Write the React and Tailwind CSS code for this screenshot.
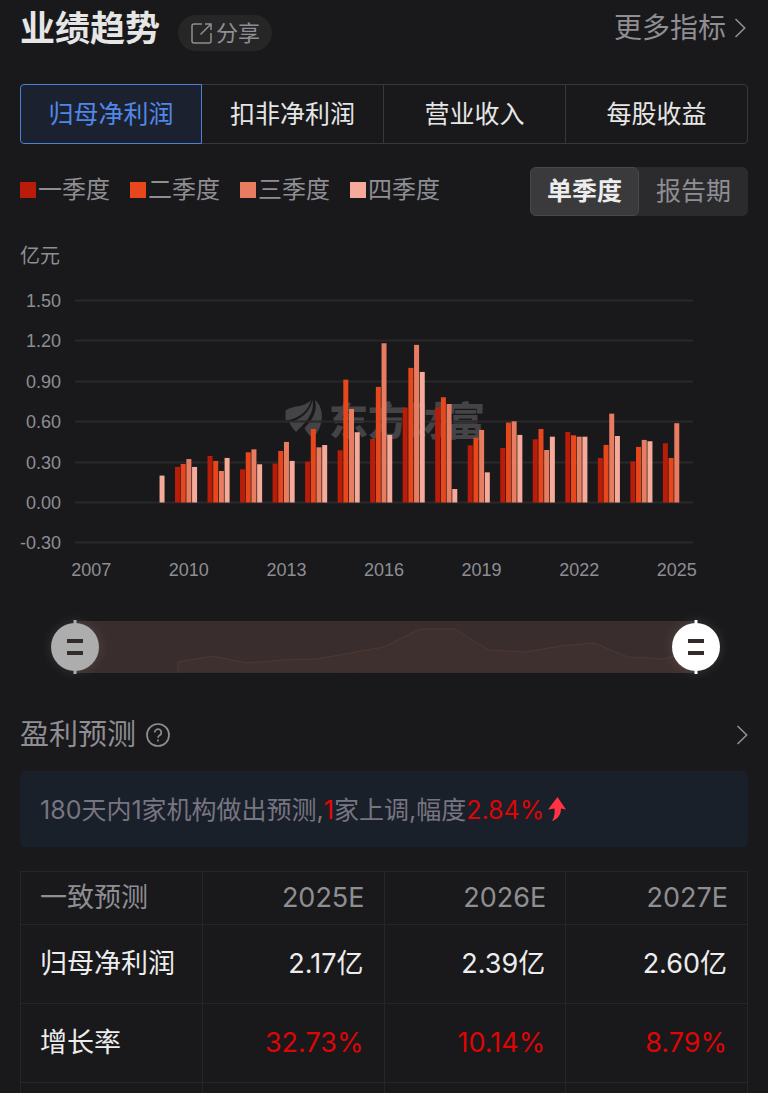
import React, { useState } from "react";

const metrics = ["归母净利润", "扣非净利润", "营业收入", "每股收益"];
const periods = ["单季度", "报告期"];

const legend = [
  { label: "一季度", color: "bg-[#b91c08]" },
  { label: "二季度", color: "bg-[#e8471c]" },
  { label: "三季度", color: "bg-[#e87c60]" },
  { label: "四季度", color: "bg-[#f6aa99]" },
];

const barFills = ["fill-[#b91c08]", "fill-[#e8471c]", "fill-[#e87c60]", "fill-[#f6aa99]"];

// quarterly net profit, 亿元
const profits = [
  { year: 2007, values: [] },
  { year: 2008, values: [] },
  { year: 2009, values: [null, null, null, 0.2] },
  { year: 2010, values: [0.264, 0.286, 0.323, 0.264] },
  { year: 2011, values: [0.346, 0.309, 0.234, 0.331] },
  { year: 2012, values: [0.247, 0.373, 0.395, 0.284] },
  { year: 2013, values: [0.289, 0.383, 0.45, 0.309] },
  { year: 2014, values: [0.304, 0.546, 0.41, 0.427] },
  { year: 2015, values: [0.388, 0.913, 0.695, 0.522] },
  { year: 2016, values: [0.472, 0.859, 1.183, 0.502] },
  { year: 2017, values: [0.705, 1.0, 1.171, 0.97] },
  { year: 2018, values: [0.705, 0.782, 0.732, 0.1] },
  { year: 2019, values: [0.425, 0.482, 0.539, 0.224] },
  { year: 2020, values: [0.405, 0.594, 0.603, 0.502] },
  { year: 2021, values: [0.47, 0.546, 0.39, 0.489] },
  { year: 2022, values: [0.524, 0.499, 0.489, 0.489] },
  { year: 2023, values: [0.331, 0.428, 0.66, 0.494] },
  { year: 2024, values: [0.306, 0.413, 0.465, 0.455] },
  { year: 2025, values: [0.44, 0.331, 0.589] },
];

const ticks = [1.5, 1.2, 0.9, 0.6, 0.3, 0, -0.3];

const forecast = [
  { name: "归母净利润", cells: ["2.17亿", "2.39亿", "2.60亿"], color: "text-[#ededed]" },
  { name: "增长率", cells: ["32.73%", "10.14%", "8.79%"], color: "text-[#dd0505]" },
];

const PLOT_LEFT = 55;
const PLOT_RIGHT = 673;
const ZERO_Y = 222;
const UNIT = 134.6;

function ShareIcon() {
  return (
    <svg viewBox="0 0 22 22" className="size-[22px]" fill="none" stroke="currentColor" strokeWidth="1.5">
      <path d="M12 2H4a2 2 0 0 0-2 2v15a2 2 0 0 0 2 2h15a2 2 0 0 0 2-2v-8" />
      <path d="M15 2h6v6M21 2L10.500 12.500" />
    </svg>
  );
}

function Chevron() {
  return (
    <svg viewBox="0 0 12 20" className="h-5 w-3" fill="none" stroke="currentColor" strokeWidth="1.6">
      <path d="M1.5 1l9.2 9-9.2 9" />
    </svg>
  );
}

function Watermark() {
  return (
    <g className="fill-[#444447]">
      <path d="M265.500 130.500C273 125 284 128 291 120C288 133 277 139 265.500 140.500z" />
      <path d="M269 142C281 140 290 132 292.500 120C295 134 285 143 276 152C273 149 271 146 269 142z" />
      <path d="M295 120C305 128 304 147 293 158C289 155 286 152 284.500 148C292 140 298 132 295 120z" />
      <text
        x="309"
        y="155"
        className="font-['Noto_Sans_CJK_SC',sans-serif] text-[39px] font-black"
      >
        东方财富
      </text>
    </g>
  );
}

function ProfitChart({ from, to }) {
  const step = (PLOT_RIGHT - PLOT_LEFT) / profits.length;

  return (
    <svg viewBox="0 0 728 320" className="block w-full h-auto" role="img" aria-label="归母净利润">
      <Watermark />
      {ticks.map((tick) => {
        const y = Math.round(ZERO_Y - tick * UNIT) + 0.5;
        return (
          <g key={tick}>
            <line x1={PLOT_LEFT} x2={PLOT_RIGHT} y1={y} y2={y} className="stroke-[#29292b]" strokeWidth="2" />
            <text
              x="41"
              y={y + 6}
              textAnchor="end"
              className="fill-[#8e8e93] font-['Liberation_Sans',sans-serif] text-[18px]"
            >
              {tick.toFixed(2)}
            </text>
          </g>
        );
      })}
      {profits.map(({ year, values }, i) => (
        <g key={year}>
          {i >= from &&
            i <= to &&
            values.map((value, q) =>
              value === null ? null : (
                <rect
                  key={q}
                  x={PLOT_LEFT + i * step + 2.4 + q * 5.7}
                  y={ZERO_Y + 0.5 - value * UNIT}
                  width="5"
                  height={value * UNIT}
                  className={barFills[q]}
                />
              )
            )}
          {i % 3 === 0 && (
            <text
              x={PLOT_LEFT + (i + 0.5) * step}
              y="296"
              textAnchor="middle"
              className="fill-[#8e8e93] font-['Liberation_Sans',sans-serif] text-[18px]"
            >
              {year}
            </text>
          )}
        </g>
      ))}
    </svg>
  );
}

function Handle({ position, active }) {
  return (
    <svg
      viewBox="0 0 48 54"
      className={`absolute top-0 h-[54px] w-12 -translate-x-1/2 drop-shadow-[0_0_6px_rgba(255,255,255,0.12)] ${
        active ? "text-white" : "text-[#adadad]"
      }`}
      style={{ left: `${position}%` }}
    >
      <path d="M22.500 0h3v54h-3z" fill="currentColor" />
      <circle cx="24" cy="27" r="24" fill="currentColor" />
      <path d="M16 19h16v4H16zM16 31h16v4H16z" className="fill-[#332a2a]" />
    </svg>
  );
}

function RangeSlider({ from, to, onFrom, onTo }) {
  const last = profits.length - 1;
  const inputStyle =
    "pointer-events-none absolute top-0 -left-6 h-full w-[calc(100%+48px)] appearance-none opacity-0 [&::-webkit-slider-thumb]:pointer-events-auto [&::-webkit-slider-thumb]:size-12 [&::-webkit-slider-thumb]:appearance-none";

  return (
    <div className="relative ml-[55px] mr-[52px] h-[54px]">
      <svg viewBox="0 0 621 54" preserveAspectRatio="none" className="block size-full">
        <rect y="1" width="621" height="52" className="fill-[#392d2d]" />
        <path
          d="M103 52V42l35-6 34 7 36-3 34-1 67-12 36-18h35l34 21 35 2 37-6 33-3 34 14 36 2 32-9v23z"
          className="fill-[#3e302f]"
        />
        <path
          d="M103 52V42l35-6 34 7 36-3 34-1 67-12 36-18h35l34 21 35 2 37-6 33-3 34 14 36 2 32-9"
          className="fill-none stroke-[#4d3934]"
        />
      </svg>
      <Handle position={(from / last) * 100} />
      <Handle position={(to / last) * 100} active />
      <input
        type="range"
        aria-label="起始年份"
        min="0"
        max={last}
        value={from}
        onChange={(e) => onFrom(Math.min(Number(e.target.value), to))}
        className={inputStyle}
      />
      <input
        type="range"
        aria-label="结束年份"
        min="0"
        max={last}
        value={to}
        onChange={(e) => onTo(Math.max(Number(e.target.value), from))}
        className={inputStyle}
      />
    </div>
  );
}

export default function App() {
  const [metric, setMetric] = useState(metrics[0]);
  const [period, setPeriod] = useState(periods[0]);
  const [from, setFrom] = useState(0);
  const [to, setTo] = useState(profits.length - 1);

  return (
    <main className="min-h-screen overflow-hidden bg-[#19191b] px-5 font-['Inter','Noto_Sans_CJK_SC',sans-serif] text-[#8e8e93]">
      {/* HEADER */}
      <header className="flex h-14 items-center justify-between">
        <div className="flex items-center gap-[18px]">
          <h1 className="text-[35px] leading-[56px] font-bold text-[#e6e6e6]">业绩趋势</h1>
          <button className="mt-[10px] flex h-9 items-center gap-1 rounded-full bg-[#262627] px-3 text-[22px]">
            <ShareIcon />
            分享
          </button>
        </div>
        <a href="#more" className="flex items-center gap-2 pr-0.5 text-[28px] leading-[56px]">
          更多指标
          <Chevron />
        </a>
      </header>

      {/* METRIC TABS */}
      <div className="mt-7 grid grid-cols-4">
        {metrics.map((item) => (
          <button
            key={item}
            onClick={() => setMetric(item)}
            className={`h-[60px] border pt-0.5 text-[25px] not-first:-ml-px first:rounded-l last:rounded-r ${
              item === metric
                ? "relative border-[#4c7fd6] bg-[#1c2130] text-[#5088e8]"
                : "border-[#38383a] text-[#e6e6e6]"
            }`}
          >
            {item}
          </button>
        ))}
      </div>

      {/* LEGEND */}
      <div className="mt-[23px] flex items-start justify-between">
        <ul className="flex gap-5 pt-[5px] text-[24px] leading-9">
          {legend.map(({ label, color }) => (
            <li key={label} className="flex items-center gap-0.5">
              <span className={`size-4 ${color}`} />
              {label}
            </li>
          ))}
        </ul>
        <div className="grid h-[49px] grid-cols-2 rounded-md bg-[#2b2b2d]">
          {periods.map((item) => (
            <button
              key={item}
              onClick={() => setPeriod(item)}
              className={`rounded-md px-4 text-[25px] ${
                item === period ? "border border-[#48484a] bg-[#3a3a3c] font-bold text-[#ededed]" : ""
              }`}
            >
              {item}
            </button>
          ))}
        </div>
      </div>

      {/* CHART */}
      <p className="mt-6 text-[20px] leading-8">亿元</p>
      <div className="mt-2">
        <ProfitChart from={from} to={to} />
      </div>
      <div className="mt-5">
        <RangeSlider from={from} to={to} onFrom={setFrom} onTo={setTo} />
      </div>

      {/* FORECAST */}
      <section className="mt-9">
        <div className="flex items-center justify-between">
          <h2 className="flex items-center gap-[10px] text-[29px] leading-[49px]">
            盈利预测
            <svg viewBox="0 0 24 24" className="size-6" fill="none" stroke="currentColor" strokeWidth="1.7">
              <circle cx="12" cy="12" r="11" />
              <path d="M8.700 9.500a3.300 3.300 0 1 1 5 2.800c-1.100.7-1.700 1.200-1.700 2.500" />
              <path d="M12 16.500v2" />
            </svg>
          </h2>
          <a href="#forecast" aria-label="盈利预测">
            <Chevron />
          </a>
        </div>

        <p className="mt-3 flex h-[76px] items-center rounded-md bg-[#1a202a] px-5 pt-1 text-[25px] text-[#777581]">
          180天内1家机构做出预测,
          <span className="text-[#ec0508]">1</span>
          家上调,幅度
          <span className="text-[#dd0505]">2.84%</span>
          <svg viewBox="0 0 18 24" className="mb-1 ml-1 h-6 w-[18px] fill-[#ff3344]">
            <path d="M9.500 0L18 12.500l-5-1c0 6-3 10.500-9 12.500 2.500-4 3-8 2.500-12.500L0 12.500z" />
          </svg>
        </p>

        <table className="mt-6 w-full table-fixed border-collapse text-[27px] [&_td]:border [&_td]:border-[#262628] [&_td]:px-5 [&_th]:border [&_th]:border-[#262628] [&_th]:px-[19px] [&_th]:font-normal">
          <thead>
            <tr className="h-[53px] text-right">
              <th className="text-left">一致预测</th>
              <th>2025E</th>
              <th>2026E</th>
              <th>2027E</th>
            </tr>
          </thead>
          <tbody>
            {forecast.map(({ name, cells, color }) => (
              <tr key={name} className="h-[79px] text-right">
                <th className="text-left text-[#ededed]">{name}</th>
                {cells.map((cell) => (
                  <td key={cell} className={color}>
                    {cell}
                  </td>
                ))}
              </tr>
            ))}
            <tr className="h-[10px]">
              <td className="border-b-0!" />
              <td className="border-b-0!" />
              <td className="border-b-0!" />
              <td className="border-b-0!" />
            </tr>
          </tbody>
        </table>
      </section>
    </main>
  );
}
